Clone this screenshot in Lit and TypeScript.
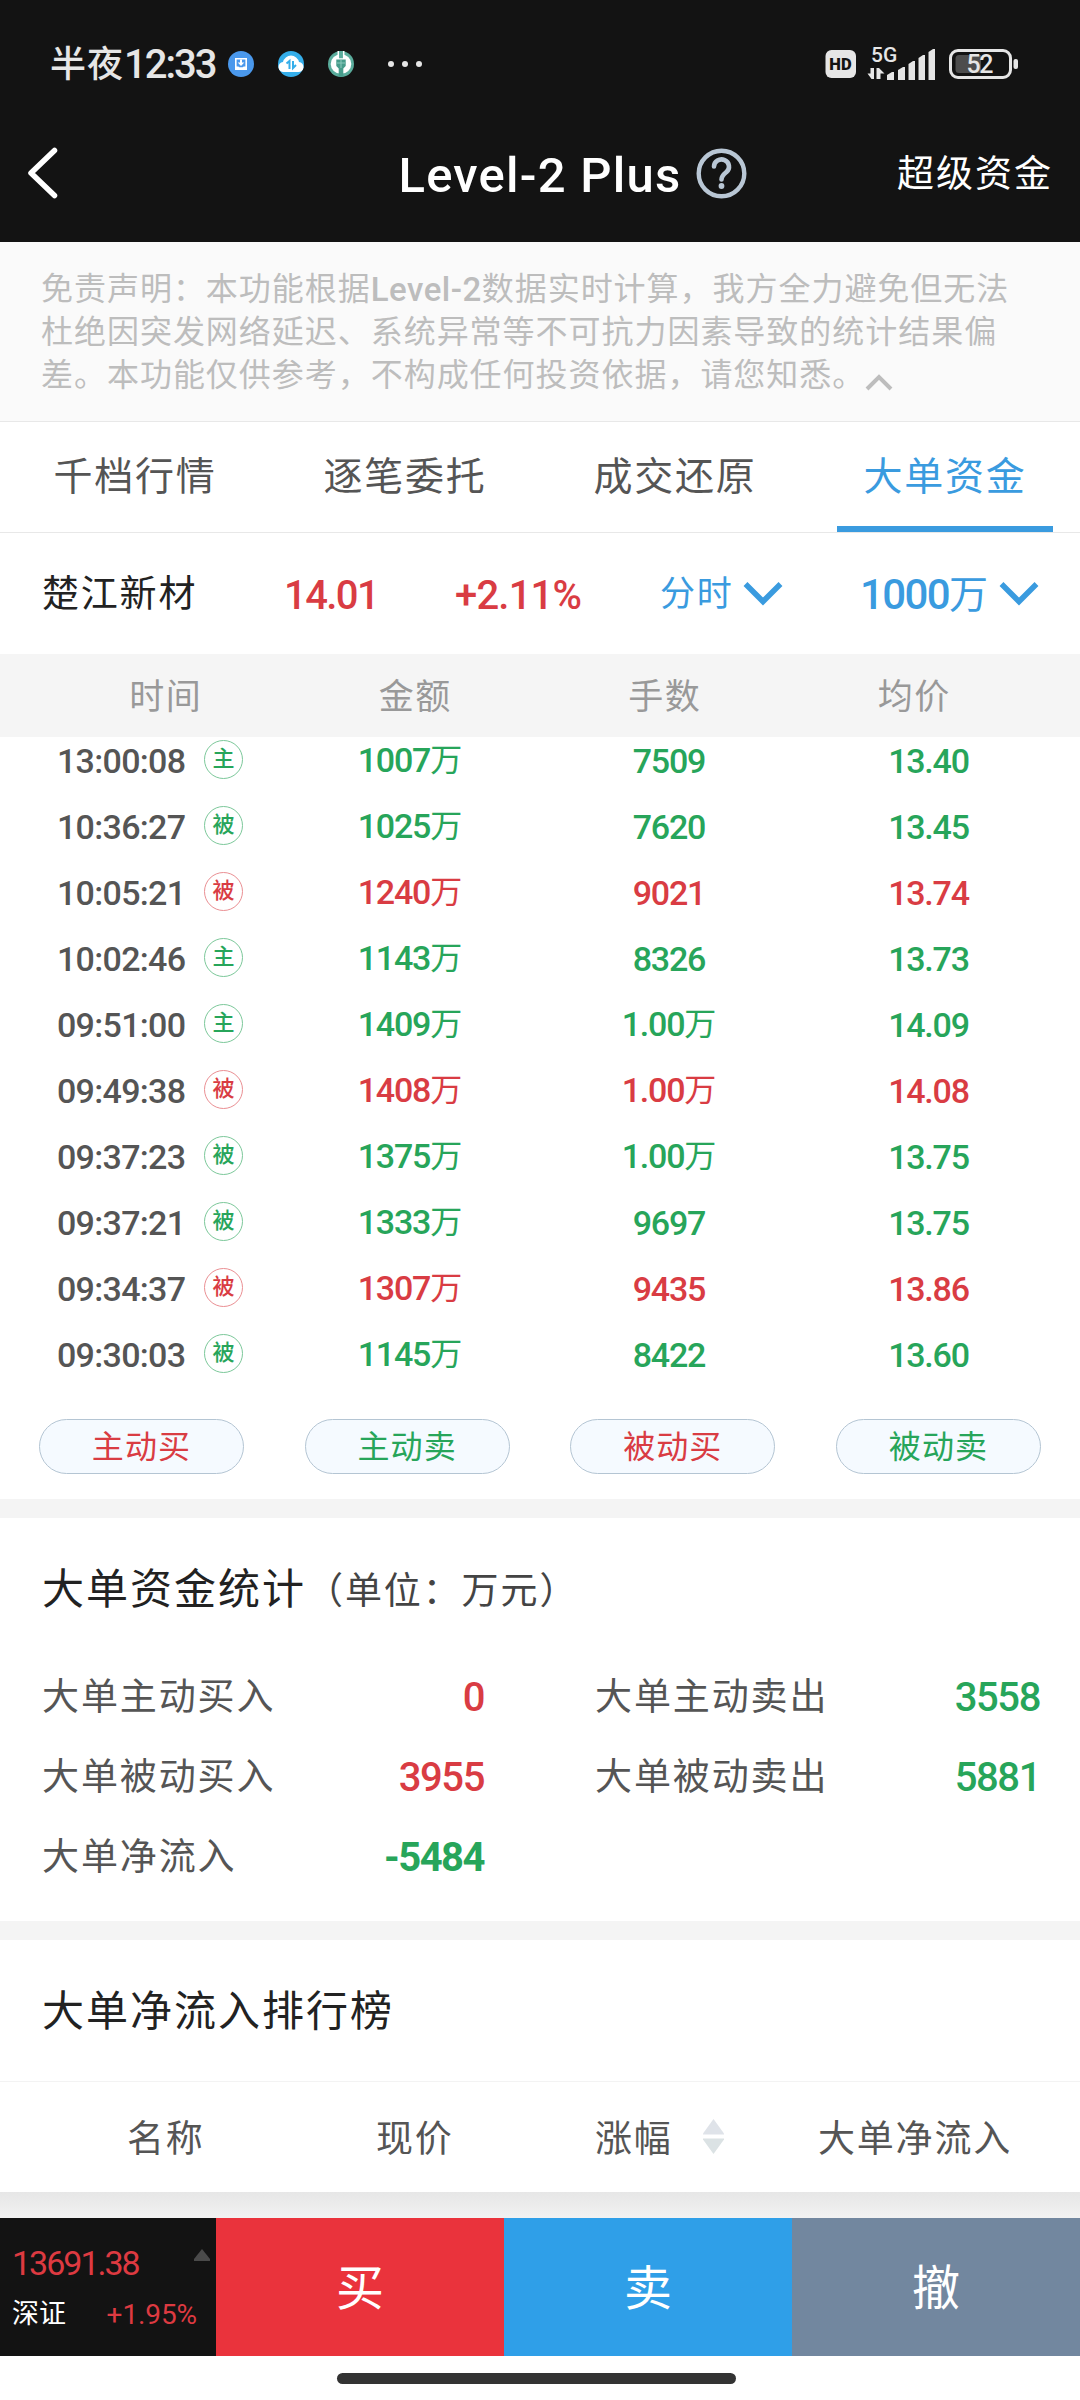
import { LitElement, html, css, svg } from "lit";
import { customElement } from "lit/decorators.js";
import { classMap } from "lit/directives/class-map.js";

type Side = "buy" | "sell";

interface Order {
  time: string;
  kind: "主" | "被";
  side: Side;
  amount: string;
  lots: string;
  price: string;
}

const order = (
  time: string,
  kind: "主" | "被",
  side: Side,
  amount: string,
  lots: string,
  price: string,
): Order => ({ time, kind, side, amount, lots, price });

const ORDERS: Order[] = [
  order("13:00:08", "主", "sell", "1007万", "7509", "13.40"),
  order("10:36:27", "被", "sell", "1025万", "7620", "13.45"),
  order("10:05:21", "被", "buy", "1240万", "9021", "13.74"),
  order("10:02:46", "主", "sell", "1143万", "8326", "13.73"),
  order("09:51:00", "主", "sell", "1409万", "1.00万", "14.09"),
  order("09:49:38", "被", "buy", "1408万", "1.00万", "14.08"),
  order("09:37:23", "被", "sell", "1375万", "1.00万", "13.75"),
  order("09:37:21", "被", "sell", "1333万", "9697", "13.75"),
  order("09:34:37", "被", "buy", "1307万", "9435", "13.86"),
  order("09:30:03", "被", "sell", "1145万", "8422", "13.60"),
];

const TABS = ["千档行情", "逐笔委托", "成交还原", "大单资金"];
const ACTIVE_TAB = 3;

const FILTERS: { label: string; side: Side }[] = [
  { label: "主动买", side: "buy" },
  { label: "主动卖", side: "sell" },
  { label: "被动买", side: "buy" },
  { label: "被动卖", side: "sell" },
];

const STATS: { label: string; value: string; side: Side; strong?: boolean }[] = [
  { label: "大单主动买入", value: "0", side: "buy" },
  { label: "大单主动卖出", value: "3558", side: "sell" },
  { label: "大单被动买入", value: "3955", side: "buy" },
  { label: "大单被动卖出", value: "5881", side: "sell" },
  { label: "大单净流入", value: "-5484", side: "sell", strong: true },
];

/** Sets the 万 unit apart from the digits, which are drawn larger. */
const figure = (text: string) =>
  text.endsWith("万")
    ? html`<span class="fig">${text.slice(0, -1)}</span><span class="unit">万</span>`
    : html`<span class="fig">${text}</span>`;

const chevronDown = html`<svg class="chev" width="40" height="26" viewBox="0 0 40 26">
  <path d="M2.500 3 L20 20.500 L37.500 3" fill="none" stroke="currentColor" stroke-width="5.500" />
</svg>`;

@customElement("status-bar")
export class StatusBar extends LitElement {
  static styles = css`
    :host {
      display: flex;
      align-items: center;
      height: 128px;
      padding: 0 61px 0 50px;
      box-sizing: border-box;
      color: #e6e6e6;
      font-family: Roboto, "Noto Sans CJK SC", sans-serif;
    }
    .clock {
      display: flex;
      align-items: center;
      width: 178px;
      height: 40px;
      line-height: 40px;
      font-weight: 500;
      white-space: nowrap;
    }
    .cn {
      padding-top: 2px;
      font-size: 36px;
      letter-spacing: 1px;
    }
    .digits {
      padding-top: 1px;
      font-size: 40px;
      letter-spacing: -2px;
    }
    .spacer {
      flex: 1;
    }
    svg {
      display: block;
      flex: none;
    }
    text {
      font-family: Roboto, sans-serif;
    }
  `;

  render() {
    const bars = [
      [0, 23, 7],
      [11, 18, 7],
      [21.5, 12, 6.5],
      [31.5, 6, 6.5],
      [41.5, 0, 6.5],
    ];
    return html`
      <div class="clock"><span class="cn">半夜</span><span class="digits">12:33</span></div>
      <svg width="196" height="28" viewBox="0 0 196 28">
        <circle cx="13" cy="14" r="13" fill="#4a98ec" />
        <path d="M7.800 8.700h10.400v9.300H7.800z" fill="none" stroke="#fff" stroke-width="1.600" />
        <path d="M7 16.500h3.500l1 1.500h3l1-1.500H19V20H7z" fill="#fff" />
        <path d="M12 9.500h2v3h2.300L13 16l-3.300-3.500H12z" fill="#fff" />
        <circle cx="63" cy="14" r="13" fill="#35aeea" />
        <path
          d="M56 22a5 5 0 0 1-1-10 8.2 8.2 0 0 1 16 0 5 5 0 0 1-1 10z"
          fill="#fff"
        />
        <path d="M58.5 13.500l3-2.500v8M65 11v7l3-3" fill="none" stroke="#35aeea" stroke-width="2" />
        <circle cx="113" cy="14" r="13" fill="#5aac9c" />
        <ellipse cx="113" cy="14" rx="10.300" ry="9.800" fill="#fff" />
        <path d="M110.300 1v8h5.400V1" fill="#5aac9c" stroke="#fff" stroke-width="1.500" />
        <path d="M108.300 9.500h9.400v6.500l-2.400 2.600v8h-4.600v-8l-2.400-2.600z" fill="#479c8b" />
        <path d="M109 13h8M113 10v8" stroke="#8ccabd" stroke-width="1" />
        <circle cx="163" cy="14" r="3" fill="#e6e6e6" />
        <circle cx="177" cy="14" r="3" fill="#e6e6e6" />
        <circle cx="191" cy="14" r="3" fill="#e6e6e6" />
      </svg>
      <div class="spacer"></div>
      <svg width="194" height="40" viewBox="825 44 194 40">
        <rect x="825.500" y="50" width="30.500" height="28" rx="6" fill="#e6e6e6" />
        <text x="829.300" y="70" font-size="16.500" font-weight="900" fill="#131313">HD</text>
        <text x="871" y="62" font-size="21" font-weight="500" fill="#e6e6e6">5G</text>
        <path d="M874 68v11h-2.500l-4-5.500h3V68zM876.500 79V68h2.500l5.500 5.500h-4V79z" fill="#e6e6e6" />
        ${bars.map(
          ([x, y, w]) =>
            svg`<path d="M${887 + x} 80V${49 + y + 3}l${w - 2} -3h2V80z" fill="#e6e6e6" />`,
        )}
        <rect x="950.500" y="50.500" width="60" height="27" rx="7.500" fill="none" stroke="#e6e6e6" stroke-width="3" />
        <path d="M959 55h22v18h-22a3.500 3.500 0 0 1-3.500-3.500v-11a3.500 3.500 0 0 1 3.500-3.500z" fill="#4d4d4d" />
        <rect x="1013.500" y="59" width="4.500" height="10" rx="2" fill="#e6e6e6" />
        <text x="966.500" y="73.300" font-size="25" font-weight="500" fill="#e6e6e6" textLength="27">52</text>
      </svg>
    `;
  }
}

@customElement("app-root")
export class AppRoot extends LitElement {
  static styles = css`
    :host {
      display: flex;
      flex-direction: column;
      width: 1080px;
      height: 2400px;
      overflow: hidden;
      background: #fff;
      color: #555;
      font-family: Roboto, "Noto Sans CJK SC", sans-serif;
      white-space: nowrap;
    }
    * {
      box-sizing: border-box;
    }
    svg {
      display: block;
      flex: none;
    }
    .buy {
      color: #d93c43;
    }
    .sell {
      color: #27a55a;
    }
    .top {
      height: 242px;
      background: #131313;
      color: #fff;
    }
    .nav {
      display: grid;
      grid-template-columns: 1fr auto 1fr;
      align-items: center;
      height: 92px;
      padding: 0 27px 2px 26px;
    }
    .heading {
      display: flex;
      align-items: center;
      gap: 14px;
      padding-left: 66px;
      font-size: 49px;
      font-weight: 500;
      line-height: 60px;
    }
    .heading span {
      padding-top: 5px;
      letter-spacing: 1.25px;
    }
    .link {
      justify-self: end;
      padding-top: 3px;
      font-size: 37px;
      letter-spacing: 2px;
      line-height: 60px;
    }
    .notice {
      height: 180px;
      padding: 26px 41px 0;
      border-bottom: 1px solid #e8e8e8;
      background: #fafafa;
      color: #bdbdbd;
      font-size: 32px;
      line-height: 43px;
      letter-spacing: 0.97px;
    }
    .notice .latin {
      font-weight: 500;
      font-size: 33px;
      letter-spacing: 0.5px;
    }
    .line {
      display: flex;
      height: 43px;
    }
    .line svg {
      margin: 18px 0 0 0;
    }
    .tabs {
      display: grid;
      grid-template-columns: repeat(4, 1fr);
      height: 111px;
      border-bottom: 1px solid #e8e8e8;
      font-size: 39px;
      letter-spacing: 1.8px;
    }
    .tab {
      display: flex;
      flex-direction: column;
      align-items: center;
      line-height: 110px;
    }
    .tab.on {
      color: #3a9bdf;
    }
    .tab.on::after {
      content: "";
      flex: none;
      width: 216px;
      height: 6px;
      margin-top: -6px;
      background: #3a9bdf;
    }
    .quote {
      display: flex;
      align-items: center;
      height: 121px;
      padding-left: 42px;
      line-height: 60px;
    }
    .name {
      width: 242px;
      padding-top: 2px;
      color: #222;
      font-size: 37px;
      letter-spacing: 1.8px;
    }
    .last,
    .change {
      padding-top: 4px;
      font-size: 40px;
      font-weight: 500;
    }
    .last {
      width: 171px;
      letter-spacing: -1.6px;
    }
    .change {
      width: 205px;
      letter-spacing: -0.8px;
    }
    .pick {
      display: flex;
      align-items: center;
      color: #3a9bdf;
    }
    .period {
      width: 200px;
      font-size: 35px;
      letter-spacing: 1.8px;
      gap: 9px;
    }
    .period span {
      padding-top: 3px;
    }
    .limit {
      gap: 11px;
    }
    .limit .fig {
      font-size: 42px;
      font-weight: 500;
      letter-spacing: -1.6px;
      padding-top: 2px;
    }
    .limit .unit {
      font-size: 39px;
      padding-top: 2px;
    }
    .limit > span {
      display: flex;
      align-items: center;
    }
    .columns {
      display: grid;
      grid-template-columns: repeat(4, 249.500px);
      height: 83px;
      padding: 2px 0 0 41px;
      background: #f5f5f5;
      color: #999;
      font-size: 35px;
      line-height: 83px;
      letter-spacing: 1.6px;
      text-align: center;
    }
    .orders {
      height: 664px;
      overflow: hidden;
      font-size: 34px;
      font-weight: 500;
      letter-spacing: -1.2px;
    }
    .rows {
      margin-top: -11px;
    }
    .row {
      display: grid;
      grid-template-columns: 280px 260px 258px 261px;
      align-items: center;
      height: 66px;
      line-height: 66px;
    }
    .time {
      display: flex;
      align-items: center;
      padding-left: 57px;
    }
    .time .clock {
      width: 147px;
      padding-top: 2px;
      letter-spacing: -0.7px;
    }
    .mark {
      display: flex;
      align-items: center;
      justify-content: center;
      width: 39px;
      height: 39px;
      margin-top: -2px;
      border: 1px solid;
      border-radius: 50%;
      font-size: 22px;
      line-height: 36px;
      letter-spacing: 0;
    }
    .mark.sell {
      border-color: #7cc89a;
    }
    .mark.buy {
      border-color: #ea8f93;
    }
    .cell {
      display: flex;
      align-items: center;
      justify-content: center;
    }
    .cell .unit {
      font-size: 32px;
      font-weight: 400;
      letter-spacing: 0;
    }
    .cell.plain {
      padding-top: 2px;
    }
    .filters {
      display: flex;
      justify-content: space-between;
      height: 98px;
      padding: 18px 39px 0;
    }
    .pill {
      width: 205px;
      height: 55px;
      border: 1px solid #b4c5d3;
      border-radius: 28px;
      background: #f5faff;
      font-size: 32px;
      line-height: 54px;
      letter-spacing: 1.1px;
      text-align: center;
    }
    .band {
      height: 19px;
      background: #f4f4f4;
    }
    .title {
      color: #222;
      font-size: 42px;
      letter-spacing: 2px;
    }
    .summary {
      height: 403px;
      padding: 42px 42px 0;
    }
    .summary .title {
      line-height: 60px;
    }
    .summary .sub {
      color: #444;
      font-size: 37px;
      letter-spacing: 1.9px;
    }
    .stats {
      display: grid;
      grid-template-columns: 441px 444px;
      column-gap: 112px;
      margin-top: 36px;
    }
    .stat {
      display: flex;
      justify-content: space-between;
      height: 80px;
      line-height: 80px;
      font-size: 37px;
      letter-spacing: 1.9px;
    }
    .value {
      margin-right: -1px;
      font-size: 40px;
      font-weight: 500;
      letter-spacing: -1.4px;
    }
    .value.strong {
      font-weight: 700;
      letter-spacing: -1.5px;
    }
    .rank {
      height: 252px;
    }
    .rank .title {
      height: 142px;
      padding-left: 42px;
      border-bottom: 1px solid #f3f3f3;
      line-height: 143px;
    }
    .rank-head {
      display: flex;
      align-items: center;
      height: 108px;
      padding-left: 127px;
      font-size: 37px;
      letter-spacing: 1.8px;
    }
    .rank-head .a {
      width: 249px;
    }
    .rank-head .b {
      width: 219px;
    }
    .rank-head .c {
      display: flex;
      align-items: center;
      gap: 30px;
      width: 223px;
    }
    .shade {
      height: 26px;
      background: linear-gradient(#e6e6e6, #f2f2f2);
    }
    .trade {
      display: grid;
      grid-template-columns: 216px repeat(3, 288px);
      height: 138px;
    }
    .index {
      display: flex;
      flex-direction: column;
      padding: 25px 6px 0 12px;
      background: #131313;
      color: #dd3a41;
    }
    .index-row {
      display: flex;
      justify-content: space-between;
    }
    .index-row.first {
      height: 48px;
      font-size: 34px;
      line-height: 41px;
      letter-spacing: -2px;
    }
    .index-row.second {
      padding-right: 13px;
      font-size: 28px;
      line-height: 47px;
      letter-spacing: -0.1px;
    }
    .market {
      color: #fff;
      font-size: 27px;
    }
    .index-row svg {
      margin-top: 6px;
    }
    .act {
      color: #fff;
      font-size: 48px;
      line-height: 141px;
      height: 138px;
      text-align: center;
    }
    .act.purchase {
      background: #ea333c;
    }
    .act.dispose {
      background: #2f9fe8;
    }
    .act.cancel {
      background: #72879f;
    }
    .home {
      width: 399px;
      height: 11px;
      margin: 17px 0 0 337px;
      border-radius: 6px;
      background: #333;
    }
  `;

  private renderOrder(o: Order) {
    const cell = (text: string) =>
      html`<div class=${classMap({ cell: true, plain: !text.endsWith("万"), [o.side]: true })}>
        ${figure(text)}
      </div>`;
    return html`<div class="row">
      <div class="time">
        <span class="clock">${o.time}</span>
        <span class="mark ${o.side}">${o.kind}</span>
      </div>
      ${cell(o.amount)} ${cell(o.lots)} ${cell(o.price)}
    </div>`;
  }

  render() {
    return html`
      <header class="top">
        <status-bar></status-bar>
        <nav class="nav">
          <svg width="34" height="52" viewBox="0 0 34 52">
            <path d="M28.500 3.500 L5 26 L28.500 48.500" fill="none" stroke="#fff" stroke-width="5.500" stroke-linecap="round" stroke-linejoin="round" />
          </svg>
          <div class="heading">
            <span>Level-2 Plus</span>
            <svg width="51" height="51" viewBox="0 0 51 51" fill="none" stroke="#b9c7d5">
              <circle cx="25.500" cy="25.500" r="22.800" stroke-width="4.400" />
              <path d="M18 18.500a7.500 7.200 0 1 1 12.500 5.500c-3 2.500-5 4-5 7.500" stroke-width="4.600" stroke-linecap="round" />
              <circle cx="25.500" cy="38" r="2.900" fill="#b9c7d5" stroke="none" />
            </svg>
          </div>
          <div class="link">超级资金</div>
        </nav>
      </header>

      <section class="notice">
        <div class="line">免责声明：本功能根据<span class="latin">Level-2</span>数据实时计算，我方全力避免但无法</div>
        <div class="line">杜绝因突发网络延迟、系统异常等不可抗力因素导致的统计结果偏</div>
        <div class="line">
          <span>差。本功能仅供参考，不构成任何投资依据，请您知悉。</span>
          <svg width="28" height="20" viewBox="0 0 28 20">
            <path d="M2 17 L14 5 L26 17" fill="none" stroke="#bdbdbd" stroke-width="4" />
          </svg>
        </div>
      </section>

      <nav class="tabs">
        ${TABS.map(
          (t, i) => html`<div class=${classMap({ tab: true, on: i === ACTIVE_TAB })}>${t}</div>`,
        )}
      </nav>

      <section class="quote">
        <div class="name">楚江新材</div>
        <div class="last buy">14.01</div>
        <div class="change buy">+2.11%</div>
        <div class="pick period"><span>分时</span>${chevronDown}</div>
        <div class="pick limit"><span>${figure("1000万")}</span>${chevronDown}</div>
      </section>

      <div class="columns">
        <span>时间</span><span>金额</span><span>手数</span><span>均价</span>
      </div>
      <section class="orders">
        <div class="rows">${ORDERS.map((o) => this.renderOrder(o))}</div>
      </section>
      <div class="filters">
        ${FILTERS.map((f) => html`<div class="pill ${f.side}">${f.label}</div>`)}
      </div>

      <div class="band"></div>
      <section class="summary">
        <div class="title">大单资金统计<span class="sub">（单位：万元）</span></div>
        <div class="stats">
          ${STATS.map(
            (s) => html`<div class="stat">
              <span>${s.label}</span>
              <span class=${classMap({ value: true, [s.side]: true, strong: !!s.strong })}>${s.value}</span>
            </div>`,
          )}
        </div>
      </section>

      <div class="band"></div>
      <section class="rank">
        <div class="title">大单净流入排行榜</div>
        <div class="rank-head">
          <span class="a">名称</span>
          <span class="b">现价</span>
          <span class="c">
            涨幅
            <svg width="21" height="35" viewBox="0 0 21 35">
              <path d="M10.500 0 L21 14.500 V15.500 H0 V14.500Z" fill="#dfe3e9" />
              <path d="M10.500 35 L21 20.500 V19.500 H0 V20.500Z" fill="#dbe2e4" />
            </svg>
          </span>
          <span>大单净流入</span>
        </div>
      </section>
      <div class="shade"></div>

      <footer class="trade">
        <div class="index">
          <div class="index-row first">
            <span>13691.38</span>
            <svg width="16" height="12" viewBox="0 0 16 12">
              <path d="M8 0 L16 10 V12 H0 V10Z" fill="#4a4a4a" />
            </svg>
          </div>
          <div class="index-row second">
            <span class="market">深证</span><span>+1.95%</span>
          </div>
        </div>
        <div class="act purchase">买</div>
        <div class="act dispose">卖</div>
        <div class="act cancel">撤</div>
      </footer>
      <div class="home"></div>
    `;
  }
}
